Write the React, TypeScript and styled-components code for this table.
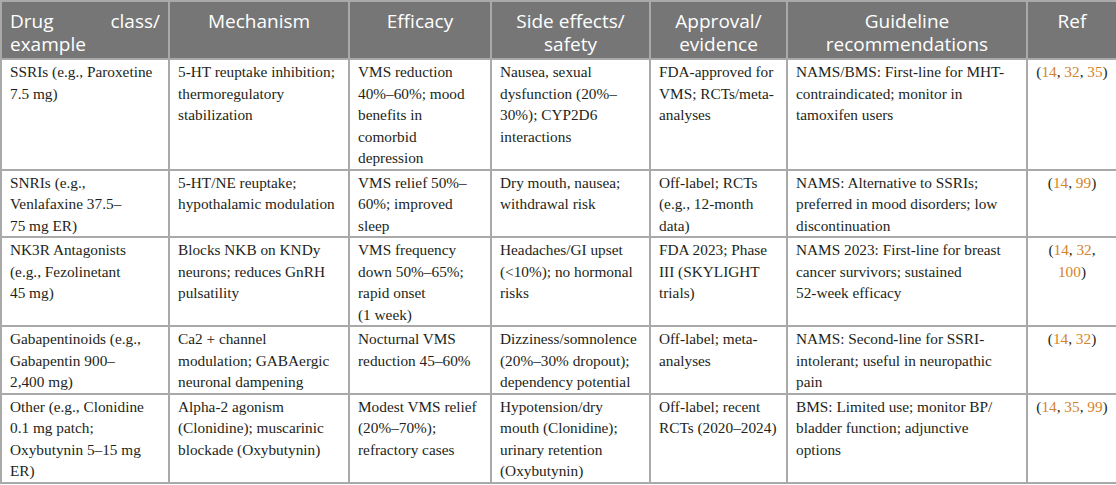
import styled, { createGlobalStyle } from "styled-components";

const GlobalStyle = createGlobalStyle`
  body {
    margin: 0;
    background: #ffffff;
  }
`;

const Table = styled.table`
  width: 1116px;
  border-collapse: collapse;
  table-layout: fixed;
  border: 2px solid #a9a9a9;
`;

const HeadCell = styled.th<{ $justify?: boolean }>`
  background: #767676;
  color: #ffffff;
  font-family: "Open Sans", "Noto Sans", sans-serif;
  font-weight: 400;
  font-size: 19px;
  line-height: 23px;
  padding: 8px 8px 2px;
  border: 2px solid #a9a9a9;
  text-align: ${(props) => (props.$justify ? "justify" : "center")};
  vertical-align: top;
`;

const Cell = styled.td<{ $center?: boolean }>`
  font-family: "Liberation Serif", "DejaVu Serif", serif;
  font-size: 15.3px;
  line-height: 21.5px;
  color: #231f20;
  padding: ${(props) => (props.$center ? "1px 3px 0" : "1px 4px 0 8px")};
  border: 2px solid #a9a9a9;
  vertical-align: top;
  white-space: pre-line;
  text-align: ${(props) => (props.$center ? "center" : "left")};
`;

const RefLink = styled.span`
  color: #d4832a;
`;

const widths = [168, 180, 142, 159, 137, 240, 90];

const headers = [
  "Drug class/ example",
  "Mechanism",
  "Efficacy",
  "Side effects/ safety",
  "Approval/ evidence",
  "Guideline recommendations",
  "Ref",
];

interface IRow {
  drug: string;
  mechanism: string;
  efficacy: string;
  safety: string;
  approval: string;
  guideline: string;
  refs: string[][];
}

const rows: IRow[] = [
  {
    drug: "SSRIs (e.g., Paroxetine\n7.5 mg)",
    mechanism: "5-HT reuptake inhibition;\nthermoregulatory\nstabilization",
    efficacy: "VMS reduction\n40%–60%; mood\nbenefits in\ncomorbid\ndepression",
    safety: "Nausea, sexual\ndysfunction (20%–\n30%); CYP2D6\ninteractions",
    approval: "FDA-approved for\nVMS; RCTs/meta-\nanalyses",
    guideline:
      "NAMS/BMS: First-line for MHT-\ncontraindicated; monitor in\ntamoxifen users",
    refs: [["14", "32", "35"]],
  },
  {
    drug: "SNRIs (e.g.,\nVenlafaxine 37.5–\n75 mg ER)",
    mechanism: "5-HT/NE reuptake;\nhypothalamic modulation",
    efficacy: "VMS relief 50%–\n60%; improved\nsleep",
    safety: "Dry mouth, nausea;\nwithdrawal risk",
    approval: "Off-label; RCTs\n(e.g., 12-month\ndata)",
    guideline:
      "NAMS: Alternative to SSRIs;\npreferred in mood disorders; low\ndiscontinuation",
    refs: [["14", "99"]],
  },
  {
    drug: "NK3R Antagonists\n(e.g., Fezolinetant\n45 mg)",
    mechanism: "Blocks NKB on KNDy\nneurons; reduces GnRH\npulsatility",
    efficacy: "VMS frequency\ndown 50%–65%;\nrapid onset\n(1 week)",
    safety: "Headaches/GI upset\n(<10%); no hormonal\nrisks",
    approval: "FDA 2023; Phase\nIII (SKYLIGHT\ntrials)",
    guideline:
      "NAMS 2023: First-line for breast\ncancer survivors; sustained\n52-week efficacy",
    refs: [["14", "32"], ["100"]],
  },
  {
    drug: "Gabapentinoids (e.g.,\nGabapentin 900–\n2,400 mg)",
    mechanism: "Ca2 + channel\nmodulation; GABAergic\nneuronal dampening",
    efficacy: "Nocturnal VMS\nreduction 45–60%",
    safety: "Dizziness/somnolence\n(20%–30% dropout);\ndependency potential",
    approval: "Off-label; meta-\nanalyses",
    guideline:
      "NAMS: Second-line for SSRI-\nintolerant; useful in neuropathic\npain",
    refs: [["14", "32"]],
  },
  {
    drug: "Other (e.g., Clonidine\n0.1 mg patch;\nOxybutynin 5–15 mg\nER)",
    mechanism: "Alpha-2 agonism\n(Clonidine); muscarinic\nblockade (Oxybutynin)",
    efficacy: "Modest VMS relief\n(20%–70%);\nrefractory cases",
    safety:
      "Hypotension/dry\nmouth (Clonidine);\nurinary retention\n(Oxybutynin)",
    approval: "Off-label; recent\nRCTs (2020–2024)",
    guideline: "BMS: Limited use; monitor BP/\nbladder function; adjunctive\noptions",
    refs: [["14", "35", "99"]],
  },
];

function Refs({ refs }: { refs: string[][] }) {
  const all = refs.flat();
  return (
    <>
      (
      {refs.map((line, li) => (
        <span key={li}>
          {line.map((r) => (
            <span key={r}>
              <RefLink>{r}</RefLink>
              {r !== all[all.length - 1] ? ", " : ""}
            </span>
          ))}
          {li < refs.length - 1 ? <br /> : null}
        </span>
      ))}
      )
    </>
  );
}

function App() {
  return (
    <>
      <GlobalStyle />
      <Table>
        <colgroup>
          {widths.map((w, i) => (
            <col key={i} style={{ width: w }} />
          ))}
        </colgroup>
        <thead>
          <tr>
            {headers.map((h, i) => (
              <HeadCell key={h} $justify={i === 0}>
                {h}
              </HeadCell>
            ))}
          </tr>
        </thead>
        <tbody>
          {rows.map((row) => (
            <tr key={row.drug}>
              <Cell>{row.drug}</Cell>
              <Cell>{row.mechanism}</Cell>
              <Cell>{row.efficacy}</Cell>
              <Cell>{row.safety}</Cell>
              <Cell>{row.approval}</Cell>
              <Cell>{row.guideline}</Cell>
              <Cell $center>
                <Refs refs={row.refs} />
              </Cell>
            </tr>
          ))}
        </tbody>
      </Table>
    </>
  );
}

export default App;
